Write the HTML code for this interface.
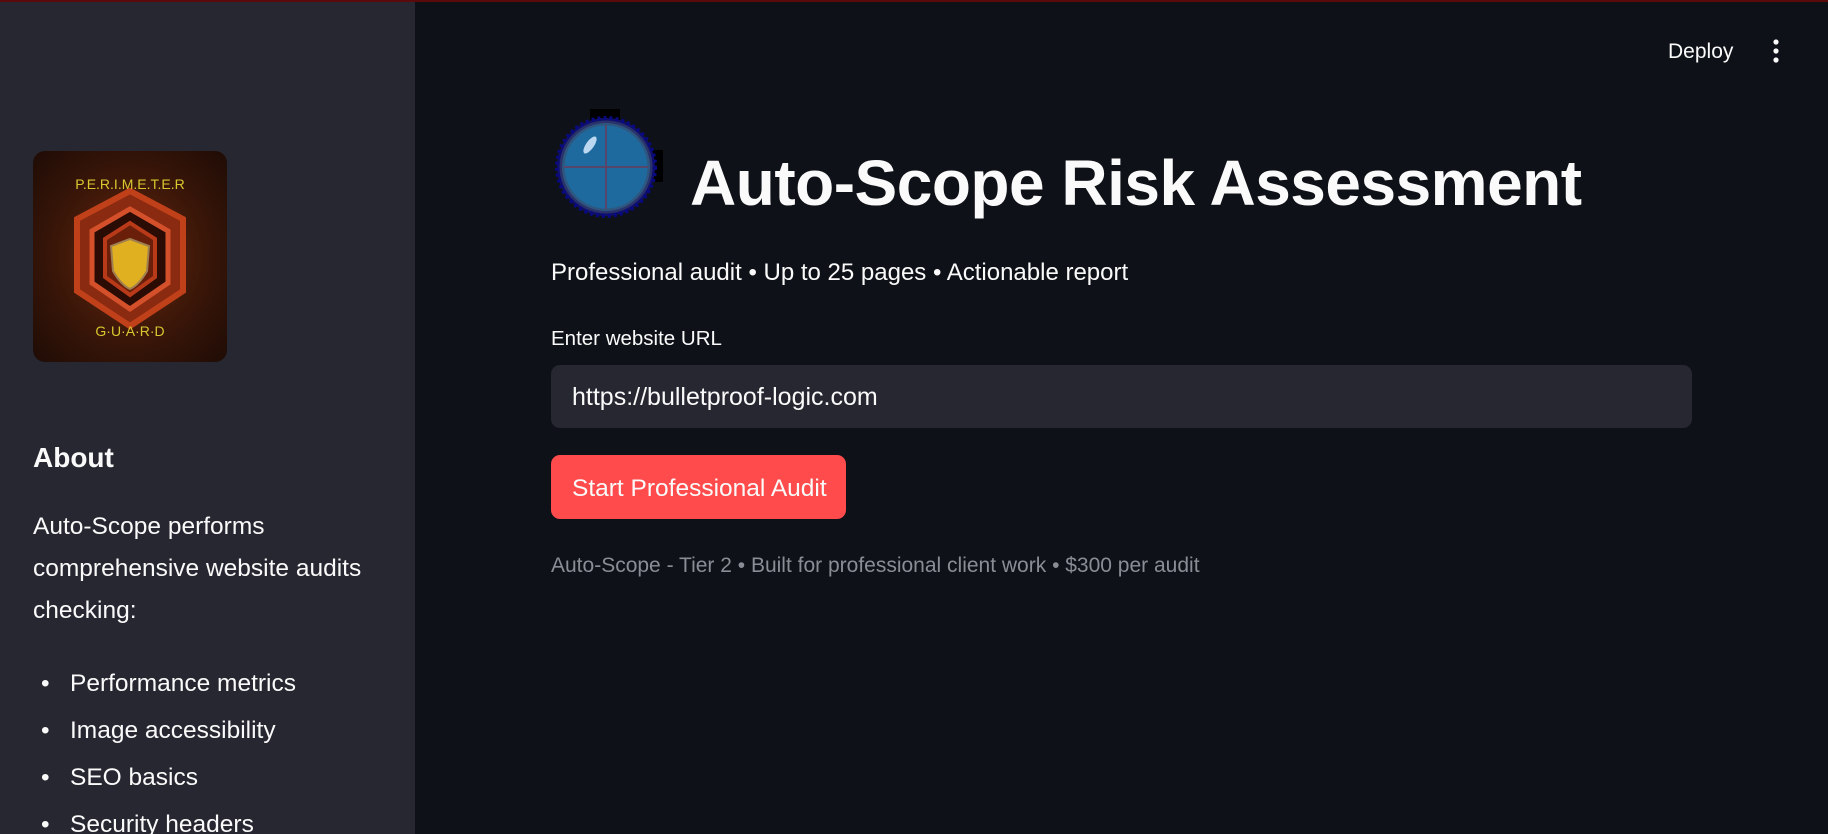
<!DOCTYPE html>
<html><head><meta charset="utf-8"><style>
*{margin:0;padding:0;box-sizing:border-box}
html,body{width:1828px;height:834px;overflow:hidden;background:#0e1117}
body{font-family:"Liberation Sans","DejaVu Sans",sans-serif;color:#fafafa;position:relative}
.topline{position:absolute;left:0;top:0;width:1828px;height:2px;background:#5a0a0a;z-index:2}
.side{position:absolute;left:0;top:0;width:415px;height:834px;background:#262730;overflow:hidden}
.abs{position:absolute;white-space:nowrap}
.logo{position:absolute;left:33px;top:151px;width:194px;height:211px;border-radius:12px;background:radial-gradient(ellipse at 50% 50%,#6b2a10 0%,#3a1608 55%,#1e0c06 100%);overflow:hidden}
</style></head><body>
<div class="topline"></div>
<div class="side">
<div class="logo">
<svg width="194" height="211" viewBox="0 0 194 211">
<polygon points="97,40 150,68 150,140 97,175 44,140 44,68" fill="#8a2a10" stroke="#c0401a" stroke-width="6"/>
<polygon points="97,58 135,80 135,132 97,158 59,132 59,80" fill="#2a0c04" stroke="#d4502a" stroke-width="5"/>
<polygon points="97,72 122,88 122,126 97,144 72,126 72,88" fill="#6a1f0a" stroke="#b83a18" stroke-width="4"/>
<path d="M97 88 L116 95 L114 120 Q106 134 97 138 Q88 134 80 120 L78 95 Z" fill="#e0b020" stroke="#a08050" stroke-width="2"/>
<text x="97" y="38" fill="#d8c830" font-size="14" text-anchor="middle" font-family="Liberation Sans">P.E.R.I.M.E.T.E.R</text>
<text x="97" y="185" fill="#d8c830" font-size="14" text-anchor="middle" font-family="Liberation Sans">G·U·A·R·D</text>
</svg>
</div>
<div class="abs" style="left:33px;top:442px;font-size:28px;font-weight:bold">About</div>
<div class="abs" style="left:33px;top:506px;font-size:24.5px;line-height:42px;white-space:normal;width:370px">Auto-Scope performs comprehensive website audits checking:</div>
<div class="abs" style="left:41px;top:660px;font-size:24.5px;line-height:47px">
<div>•&nbsp;&nbsp;&nbsp;Performance metrics</div>
<div>•&nbsp;&nbsp;&nbsp;Image accessibility</div>
<div>•&nbsp;&nbsp;&nbsp;SEO basics</div>
<div>•&nbsp;&nbsp;&nbsp;Security headers</div>
</div>
</div>
<div class="abs" style="left:1668px;top:40px;font-size:21px">Deploy</div>
<svg class="abs" style="left:1770px;top:38px" width="12" height="26"><circle cx="6" cy="4" r="2.6" fill="#fafafa"/><circle cx="6" cy="13" r="2.6" fill="#fafafa"/><circle cx="6" cy="22" r="2.6" fill="#fafafa"/></svg>
<svg class="abs" style="left:550px;top:105px" width="120" height="120" viewBox="0 0 120 120">
<rect x="40" y="4" width="30" height="16" fill="#000"/>
<rect x="95" y="45" width="18" height="32" fill="#000"/>
<circle cx="56" cy="62" r="49" fill="#10106a" stroke="#0a0a80" stroke-width="4" stroke-dasharray="3 3"/>
<circle cx="56" cy="62" r="44" fill="#1e6a9e"/>
<circle cx="56" cy="62" r="44" fill="none" stroke="#3a4a6a" stroke-width="5" opacity=".6"/>
<line x1="14" y1="62" x2="98" y2="62" stroke="#6a3a5a" stroke-width="1.5"/>
<line x1="56" y1="20" x2="56" y2="104" stroke="#6a3a5a" stroke-width="1.5"/>
<ellipse cx="40" cy="40" rx="4" ry="10" transform="rotate(35 40 40)" fill="#bcd8f0"/>
</svg>
<div class="abs" style="left:690px;top:143px;font-size:64px;font-weight:bold;line-height:80px;letter-spacing:-0.5px">Auto-Scope Risk Assessment</div>
<div class="abs" style="left:551px;top:259px;font-size:24px">Professional audit • Up to 25 pages • Actionable report</div>
<div class="abs" style="left:551px;top:327px;font-size:20.5px">Enter website URL</div>
<div class="abs" style="left:551px;top:365px;width:1141px;height:63px;background:#262730;border-radius:9px"></div>
<div class="abs" style="left:572px;top:383px;font-size:25px">https://bulletproof-logic.com</div>
<div class="abs" style="left:551px;top:455px;width:295px;height:64px;background:#ff4b4b;border-radius:9px"></div>
<div class="abs" style="left:572px;top:475px;font-size:24.5px">Start Professional Audit</div>
<div class="abs" style="left:551px;top:554px;font-size:21px;color:#8a8d96">Auto-Scope - Tier 2 • Built for professional client work • $300 per audit</div>
</body></html>
